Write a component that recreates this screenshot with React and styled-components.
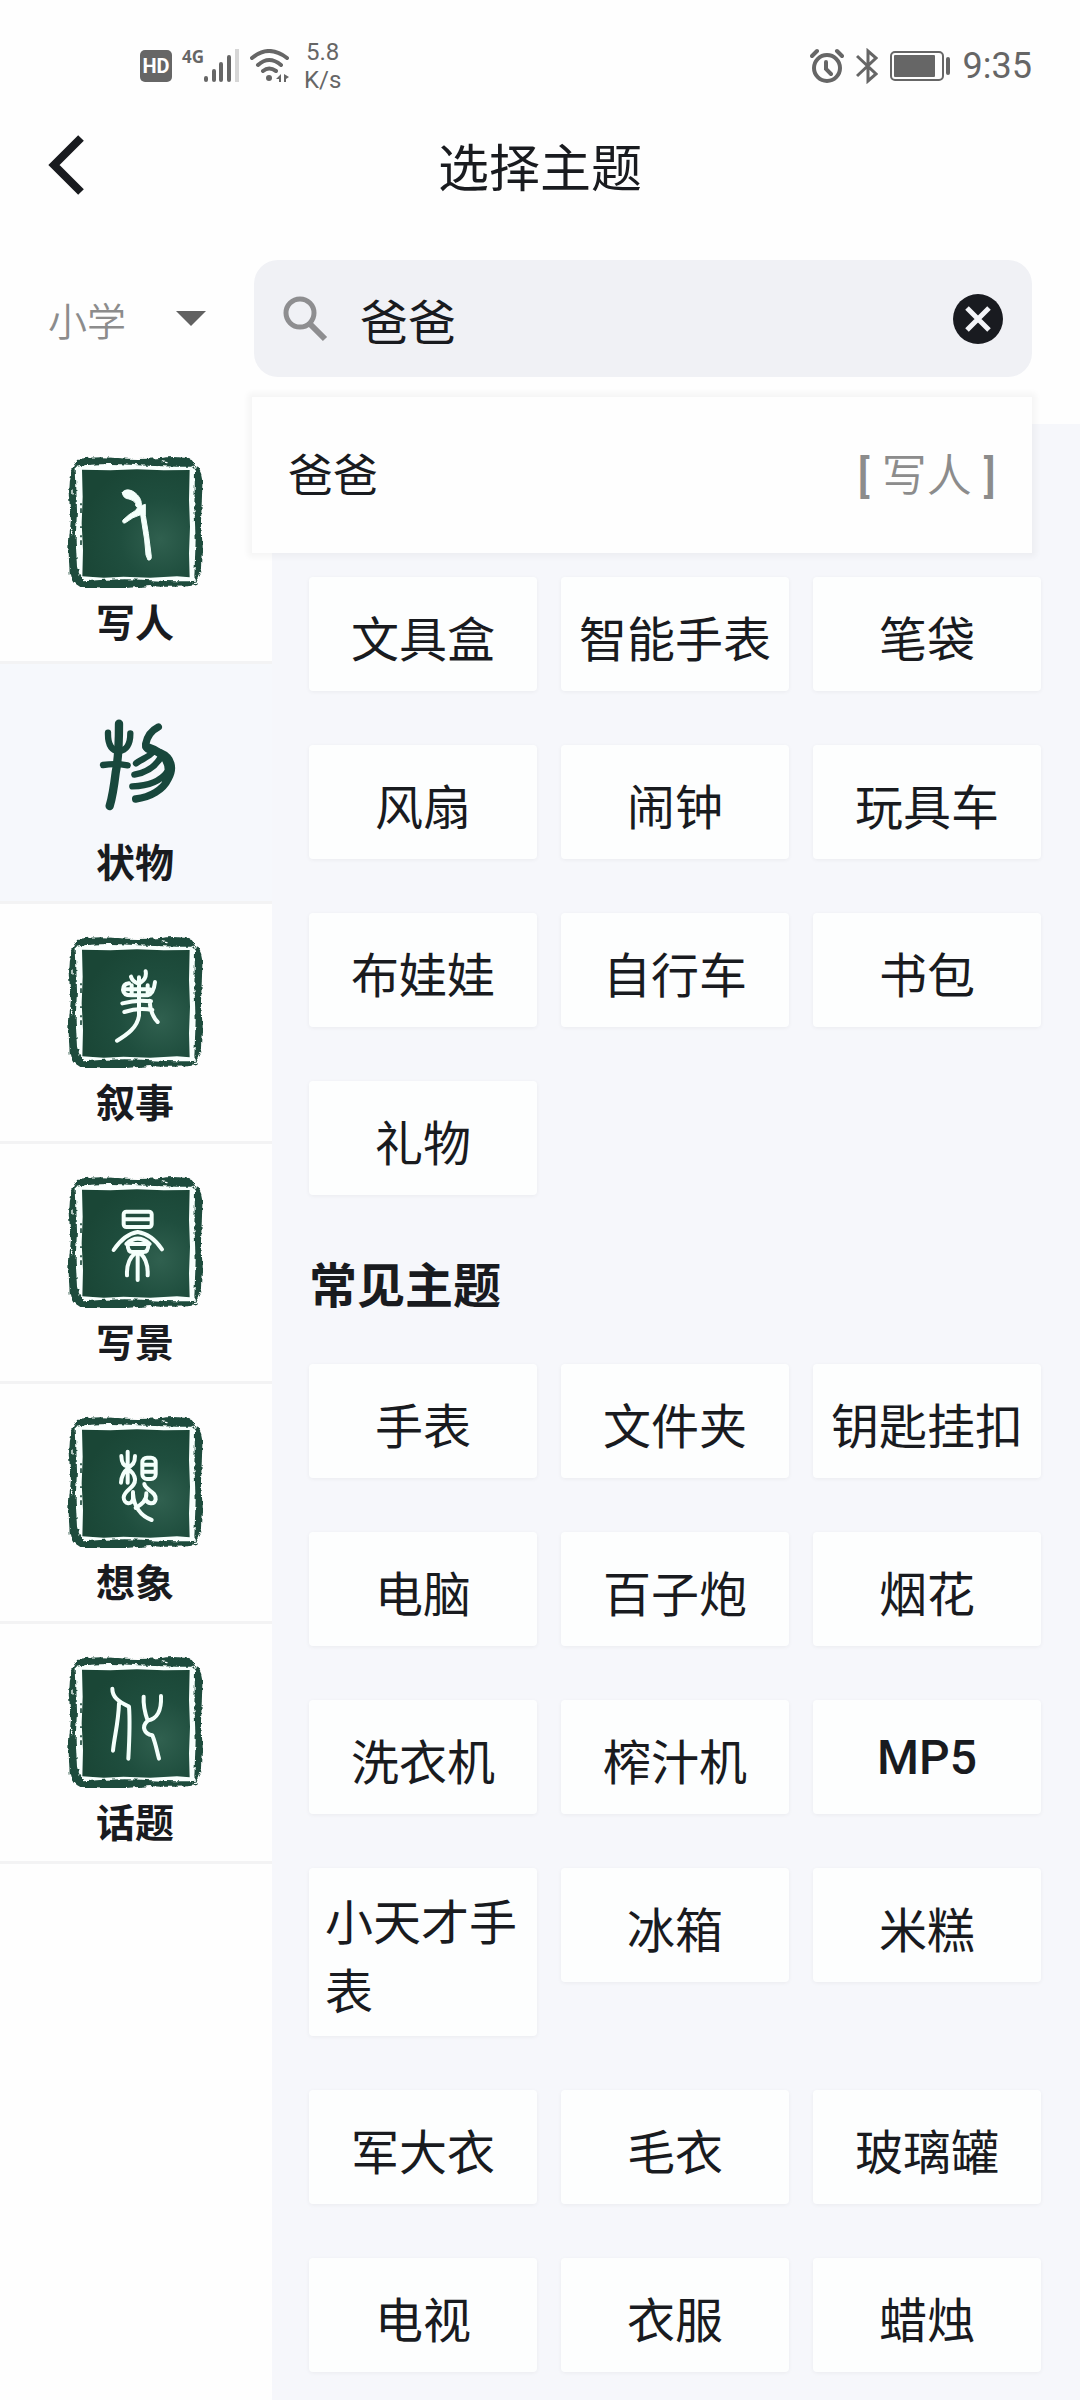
import React, { useState } from "react";
import styled, { createGlobalStyle } from "styled-components";

const GlobalStyle = createGlobalStyle`
  * {
    box-sizing: border-box;
    margin: 0;
    padding: 0;
  }

  body {
    background: #fefefe;
    color: #191b1f;
    font-family: "Noto Sans CJK SC", Roboto, sans-serif;
  }

  button,
  input,
  select {
    font-family: inherit;
    color: inherit;
    border: none;
    background: none;
    outline: none;
  }

  button {
    cursor: pointer;
  }
`;

const Page = styled.div`
  min-height: 100vh;
  display: flex;
  flex-direction: column;
`;

const StatusBar = styled.div`
  height: 104px;
  padding: 28px 48px 0 140px;
  display: flex;
  align-items: center;
  justify-content: space-between;
  color: #666;
  font-family: Roboto, sans-serif;
`;

const StatusGroup = styled.div`
  display: flex;
  align-items: center;
  gap: ${(props) => props.$gap}px;

  & svg {
    display: block;
  }
`;

const HdBadge = styled.span`
  width: 32px;
  height: 32px;
  border-radius: 5px;
  background: #666;
  color: #fff;
  font-size: 20px;
  font-weight: 700;
  line-height: 32px;
  text-align: center;
`;

const Network = styled.div`
  display: flex;
  align-items: flex-start;
`;

const NetworkType = styled.span`
  font-family: "Open Sans", sans-serif;
  font-size: 17px;
  font-weight: 700;
  line-height: 16px;
`;

const Speed = styled.div`
  margin-left: 4px;
  font-size: 24px;
  line-height: 28px;
  text-align: center;
`;

const Clock = styled.span`
  font-size: 36px;
  line-height: 40px;
`;

const Header = styled.header`
  height: 128px;
  padding: 0 48px 6px;
  display: grid;
  grid-template-columns: 60px 1fr 60px;
  align-items: center;
`;

const Back = styled.button`
  width: 36px;
  height: 60px;

  & svg {
    display: block;
  }
`;

const Title = styled.h1`
  font-size: 51px;
  font-weight: 400;
  line-height: 68px;
  text-align: center;
`;

const Filters = styled.div`
  height: 192px;
  padding: 28px 48px 0;
  display: flex;
  align-items: flex-start;
`;

const Grade = styled.label`
  flex: 0 0 158px;
  margin-right: 48px;
  height: 117px;
  display: grid;
  align-items: center;

  & > * {
    grid-area: 1 / 1;
  }

  & svg {
    justify-self: end;
    pointer-events: none;
  }
`;

const GradeSelect = styled.select`
  appearance: none;
  width: 100%;
  height: 68px;
  color: #8c8c8c;
  font-size: 39px;
  font-weight: 350;
  cursor: pointer;
`;

const Search = styled.div`
  flex: 1;
  position: relative;
`;

const SearchBox = styled.div`
  height: 117px;
  padding: 0 29px;
  display: flex;
  align-items: center;
  border-radius: 24px;
  background: #f0f1f5;
`;

const SearchInput = styled.input`
  flex: 1;
  min-width: 0;
  height: 80px;
  margin: 0 32px;
  font-size: 48px;
`;

const Clear = styled.button`
  width: 50px;
  height: 50px;

  & svg {
    display: block;
  }
`;

const Suggestions = styled.ul`
  position: absolute;
  top: calc(100% + 20px);
  left: -2px;
  right: 0;
  z-index: 1;
  list-style: none;
  background: #fefefe;
  box-shadow: 0 0 6px 4px rgba(0, 0, 0, 0.04);
`;

const Suggestion = styled.button`
  width: 100%;
  height: 156px;
  padding: 0 36px 6px;
  display: flex;
  align-items: center;
  justify-content: space-between;
  font-size: 45px;
`;

const Category = styled.span`
  display: flex;
  align-items: baseline;
  gap: 12px;
  color: #8c8c8c;
  font-weight: 350;

  &::before,
  &::after {
    font-family: Roboto, sans-serif;
    font-weight: 500;
  }

  &::before {
    content: "[";
  }

  &::after {
    content: "]";
  }
`;

const Body = styled.div`
  flex: 1;
  display: flex;
`;

const Sidebar = styled.nav`
  flex: 0 0 272px;
`;

const Tab = styled.button`
  width: 100%;
  height: 240px;
  padding: 30px 2px 0 0;
  display: flex;
  flex-direction: column;
  align-items: center;
  border-bottom: 3px solid #f3f3f4;
  background: ${(props) => (props.$active ? "#f6f8fc" : "#fefefe")};

  & svg {
    display: block;
  }
`;

const TabLabel = styled.span`
  margin-top: 4px;
  font-size: 39px;
  font-weight: 700;
  line-height: 56px;
`;

const Content = styled.main`
  flex: 1;
  padding: 153px 39px 27px 37px;
  background: #f6f7fb;
`;

const Heading = styled.h2`
  margin: 52px 0 47px;
  font-size: 48px;
  font-weight: 700;
  line-height: 70px;
`;

const Topics = styled.div`
  display: grid;
  grid-template-columns: repeat(3, 1fr);
  align-items: start;
  gap: 54px 24px;
`;

const Topic = styled.button`
  min-height: 114px;
  padding: 17px 16px 13px;
  display: flex;
  align-items: center;
  justify-content: center;
  border-radius: 4px;
  background: #fdfefe;
  box-shadow: 0 1px 4px rgba(0, 0, 0, 0.05);
  font-size: 48px;
  line-height: 69px;
  text-align: left;
`;

const LatinTopic = styled(Topic)`
  padding: 15px 16px;
  font-family: Roboto, sans-serif;
  font-weight: 500;
`;

const GREEN = "#1d4b3c";

const glyphs = {
  person: (
    <path
      fill="#f4fffb"
      strokeWidth="3"
      d="M216 158C222 146 242 147 256 160C270 172 274 184 273 197L285 193L285 226L294 280L303 350Q303 362 293 360L287 345L283 300L271 224Q248 230 224 249Q214 250 218 240Q236 222 255 212L262 203Q254 200 256 190Q250 180 236 177Q218 176 216 158Z"
    />
  ),
  event: (
    <>
      <path d="M286 154Q290 176 270 188M242 170Q246 184 262 190M266 172V286C262 322 230 344 200 362" />
      <path d="M236 190Q218 192 218 210Q220 226 242 226H292Q310 222 314 186M226 208H298M244 196V224M292 196V224" />
      <path d="M216 250Q260 238 302 244M222 276Q264 262 306 270M298 242Q300 284 322 306" />
    </>
  ),
  scenery: (
    <>
      <rect x="220" y="155" width="84" height="46" rx="8" />
      <path d="M222 178H302M190 270Q222 222 262 216Q304 222 335 268" />
      <path d="M228 252Q262 220 298 252M232 252H294Q294 276 280 276H246Q232 276 232 252" />
      <path d="M254 280Q228 302 230 346M262 280V360M270 280Q294 302 292 346" />
    </>
  ),
  thought: (
    <>
      <path d="M232 155V248M213 168Q214 198 232 200Q254 198 254 168M212 248Q214 220 232 206Q252 218 254 238" />
      <rect x="276" y="173" width="40" height="64" rx="14" />
      <path d="M278 194H314M278 215H314" />
      <path d="M254 238C256 264 222 268 220 292C220 314 246 316 248 296V276M248 280C250 318 270 348 304 360" />
      <path d="M282 252C286 272 318 274 316 298C312 316 290 312 286 296M288 280C290 304 268 316 256 324" />
    </>
  ),
  topic: (
    <>
      <path d="M186 146C186 170 202 184 236 200Q240 250 234 356M206 190C204 250 192 290 188 332" />
      <path d="M280 170C278 200 286 225 292 242C320 236 334 215 332 168M292 242C272 260 282 282 306 286C316 310 320 335 326 356" />
    </>
  ),
};

// shared paint and rough-edge filter of the stamps
const SealDefs = () => (
  <svg width="0" height="0" style={{ position: "absolute" }} aria-hidden="true">
    <defs>
      <radialGradient
        id="seal-paint"
        gradientUnits="userSpaceOnUse"
        cx="330"
        cy="300"
        r="240"
      >
        <stop offset="0" stopColor="#30604f" />
        <stop offset="0.5" stopColor="#1f4e3e" />
        <stop offset="1" stopColor="#1a4636" />
      </radialGradient>
      <filter
        id="seal-rough"
        x="-5%"
        y="-5%"
        width="110%"
        height="110%"
        colorInterpolationFilters="sRGB"
      >
        <feTurbulence
          type="fractalNoise"
          baseFrequency="0.06"
          numOctaves="3"
          seed="4"
        />
        <feDisplacementMap
          in="SourceGraphic"
          scale="14"
          xChannelSelector="R"
          yChannelSelector="G"
        />
      </filter>
    </defs>
  </svg>
);

const Seal = ({ glyph }) => (
  <svg width="136" height="134" viewBox="50 42 408 402" aria-hidden="true">
    <g filter="url(#seal-rough)">
      <path
        fill={GREEN}
        d="M84 56Q140 48 200 54T330 54Q390 46 424 60L442 82Q458 100 456 140L452 250L458 330L454 396Q440 406 438 436Q380 444 300 438L200 446L90 444Q62 430 58 400L54 320L62 240L54 150Q54 90 84 56Z"
      />
      <path
        fill="#f8fffd"
        d="M76 80Q140 68 240 74T424 80L434 92L432 200L436 300L432 412L438 422Q380 426 290 420T102 424Q86 408 80 380L76 300L80 210Z"
      />
      <path
        fill="none"
        stroke="#f8fffd"
        strokeWidth="4"
        strokeLinecap="round"
        d="M336 66L350 68M78 96L86 92M68 150V162M64 268V284M432 428L444 426M428 84L438 78"
      />
    </g>
    <path
      fill="url(#seal-paint)"
      d="M95 89L180 91L260 88L340 91L418 90L416 180L419 260L416 340L418 412L380 409L300 413L220 410L160 413L96 409L98 330L94 250L97 170Z"
    />
    <path
      fill="none"
      stroke={GREEN}
      strokeWidth="5"
      strokeDasharray="6 9 14 40 5 22"
      d="M92 190V330"
    />
    <g
      fill="none"
      stroke="#f4fffb"
      strokeWidth="12"
      strokeLinecap="round"
      strokeLinejoin="round"
    >
      {glyphs[glyph]}
    </g>
  </svg>
);

const ObjectGlyph = () => (
  <svg width="136" height="134" viewBox="50 14 408 402" aria-hidden="true">
    <g
      fill="none"
      stroke="#18473c"
      strokeWidth="22"
      strokeLinecap="round"
      strokeLinejoin="round"
    >
      <path
        d="M206 103C206 150 206 200 196 250C190 300 184 330 178 350"
        strokeWidth="25"
      />
      <path
        d="M173 130C172 168 185 184 206 186C230 182 240 165 240 132M158 227Q195 221 232 228"
        strokeWidth="19"
      />
      <path d="M324 113C302 124 290 144 286 164C284 186 308 182 330 190C364 204 372 236 354 268C338 302 300 324 256 329" />
      <path
        d="M257 222C276 208 294 204 308 188M252 256C286 250 312 236 330 206M246 291C286 290 326 282 352 246"
        strokeWidth="19"
      />
      <path
        d="M288 172Q330 186 346 210Q364 240 346 272"
        strokeWidth="24"
      />
    </g>
  </svg>
);

const SignalIcon = () => (
  <svg width="36" height="34" viewBox="0 0 36 34" aria-hidden="true">
    <g stroke="currentColor" strokeWidth="4" strokeLinecap="round">
      <path d="M2 29V31M10 22V31M17 15V31M25 8V31" />
    </g>
    <path d="M33 0V33" stroke="#d6d6d6" strokeWidth="4" />
  </svg>
);

const WifiIcon = () => (
  <svg width="40" height="34" viewBox="0 0 40 34" aria-hidden="true">
    <g fill="none" stroke="currentColor" strokeWidth="4" strokeLinecap="round">
      <path d="M2 9Q19 -5 37 9M8 16Q19 6 31 16M13 22Q19 17 26 22" />
    </g>
    <circle cx="19" cy="29" r="3" fill="currentColor" />
    <path
      d="M26 30L31 25V33H29V30ZM34 25L39 28L36 30V33H34Z"
      fill="currentColor"
    />
  </svg>
);

const AlarmIcon = () => (
  <svg width="34" height="36" viewBox="0 0 34 36" aria-hidden="true">
    <g fill="none" stroke="currentColor" strokeWidth="4" strokeLinecap="round">
      <circle cx="17" cy="20" r="13" />
      <path d="M16 14V21L21 26M2 8L7 3M27 3L32 8" />
    </g>
  </svg>
);

const BluetoothIcon = () => (
  <svg width="22" height="36" viewBox="0 0 22 36" aria-hidden="true">
    <path
      d="M1 8L20 26L12 33V3L20 10L1 28"
      fill="none"
      stroke="currentColor"
      strokeWidth="3"
    />
  </svg>
);

const BatteryIcon = () => (
  <svg width="61" height="30" viewBox="0 0 61 30" aria-hidden="true">
    <rect
      x="1"
      y="1"
      width="52"
      height="28"
      rx="4"
      fill="none"
      stroke="currentColor"
      strokeWidth="2"
    />
    <rect x="4" y="4" width="41" height="22" rx="1" fill="currentColor" />
    <path
      d="M58 8V22"
      stroke="currentColor"
      strokeWidth="4"
      strokeLinecap="round"
    />
  </svg>
);

const tabs = [
  { id: "person", label: "写人" },
  { id: "object", label: "状物" },
  { id: "event", label: "叙事" },
  { id: "scenery", label: "写景" },
  { id: "thought", label: "想象" },
  { id: "topic", label: "话题" },
];

const hotTopics = [
  "文具盒",
  "智能手表",
  "笔袋",
  "风扇",
  "闹钟",
  "玩具车",
  "布娃娃",
  "自行车",
  "书包",
  "礼物",
];

const commonTopics = [
  "手表",
  "文件夹",
  "钥匙挂扣",
  "电脑",
  "百子炮",
  "烟花",
  "洗衣机",
  "榨汁机",
  "MP5",
  "小天才手表",
  "冰箱",
  "米糕",
  "军大衣",
  "毛衣",
  "玻璃罐",
  "电视",
  "衣服",
  "蜡烛",
];

const TopicGrid = ({ items }) => (
  <Topics>
    {items.map((item) =>
      /^[A-Z0-9]+$/.test(item) ? (
        <LatinTopic key={item}>{item}</LatinTopic>
      ) : (
        <Topic key={item}>{item}</Topic>
      )
    )}
  </Topics>
);

const App = () => {
  const [query, setQuery] = useState("爸爸");
  const [active, setActive] = useState("object");

  return (
    <Page>
      <GlobalStyle />
      <SealDefs />
      <StatusBar>
        <StatusGroup $gap={10}>
          <HdBadge>HD</HdBadge>
          <Network>
            <NetworkType>4G</NetworkType>
            <SignalIcon />
          </Network>
          <WifiIcon />
          <Speed>
            5.8
            <br />
            K/s
          </Speed>
        </StatusGroup>
        <StatusGroup $gap={12}>
          <AlarmIcon />
          <BluetoothIcon />
          <BatteryIcon />
          <Clock>9:35</Clock>
        </StatusGroup>
      </StatusBar>

      <Header>
        <Back aria-label="返回">
          <svg width="36" height="60" viewBox="0 0 36 60">
            <path
              d="M33 3L6 30L33 57"
              fill="none"
              stroke="#191b1f"
              strokeWidth="8"
            />
          </svg>
        </Back>
        <Title>选择主题</Title>
      </Header>

      <Filters>
        <Grade>
          <GradeSelect aria-label="年级" defaultValue="小学">
            <option>小学</option>
          </GradeSelect>
          <svg width="30" height="15" viewBox="0 0 30 15" aria-hidden="true">
            <path d="M0 0H30L15 15Z" fill="#616161" />
          </svg>
        </Grade>
        <Search>
          <SearchBox>
            <svg width="45" height="46" viewBox="0 0 45 46" aria-hidden="true">
              <g fill="none" stroke="#8e8e90">
                <circle cx="17" cy="17" r="14" strokeWidth="5" />
                <path d="M27 28L42 43" strokeWidth="6" />
              </g>
            </svg>
            <SearchInput
              aria-label="搜索主题"
              value={query}
              onChange={(event) => setQuery(event.target.value)}
            />
            <Clear aria-label="清除" onClick={() => setQuery("")}>
              <svg width="50" height="50" viewBox="0 0 50 50">
                <circle cx="25" cy="25" r="25" fill="#191b20" />
                <path
                  d="M14 14L36 36M36 14L14 36"
                  stroke="#f3f4f8"
                  strokeWidth="5"
                />
              </svg>
            </Clear>
          </SearchBox>
          {query && (
            <Suggestions>
              <li>
                <Suggestion>
                  {query}
                  <Category>写人</Category>
                </Suggestion>
              </li>
            </Suggestions>
          )}
        </Search>
      </Filters>

      <Body>
        <Sidebar>
          {tabs.map(({ id, label }) => (
            <Tab
              key={id}
              $active={id === active}
              onClick={() => setActive(id)}
            >
              {id === "object" ? <ObjectGlyph /> : <Seal glyph={id} />}
              <TabLabel>{label}</TabLabel>
            </Tab>
          ))}
        </Sidebar>
        <Content>
          <TopicGrid items={hotTopics} />
          <Heading>常见主题</Heading>
          <TopicGrid items={commonTopics} />
        </Content>
      </Body>
    </Page>
  );
};

export default App;
